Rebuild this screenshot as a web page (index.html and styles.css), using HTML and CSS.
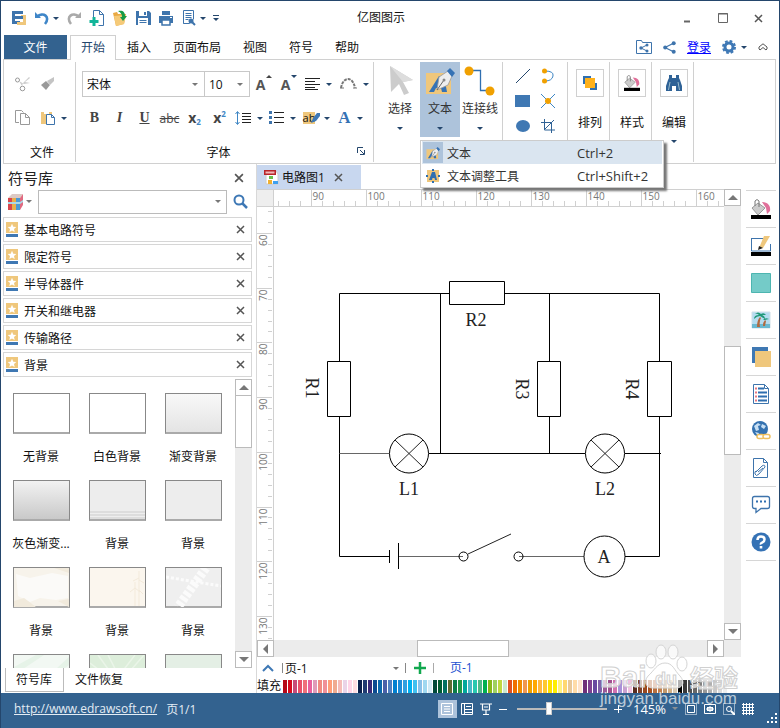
FILE: index.html
```html
<!DOCTYPE html>
<html lang="zh-CN">
<head>
<meta charset="utf-8">
<title>亿图图示</title>
<meta name="viewport" content="width=device-width, initial-scale=1">
<link rel="stylesheet" href="styles.css">
</head>
<body>
<svg class="sprite" aria-hidden="true">
  <symbol id="close" viewBox="0 0 9 9"><path d="M1 1l7 7M8 1l-7 7" stroke="currentColor" stroke-width="1.5" fill="none"/></symbol>
  <symbol id="star" viewBox="0 0 12 15"><path d="M0 0h12v11H0z" fill="#efc77c"/><path d="M0 12h12v3H0z" fill="#3f78b3"/><path d="M6 1.8l1.3 2.9 3 .3-2.300 2.100.700 3L6 8.500 3.300 10.100l.700-3L1.700 5l3-.3z" fill="#fff"/></symbol>
  <symbol id="pen-a" viewBox="0 0 30 30"><path d="M1 7h25v21H1z" fill="#efc77c"/><path d="M4 26L14 10h5l3 16h-5l-1-4h-5l-2 4z" fill="#3572b5"/><path d="M12 24L14 11l9-6 4 5-4 9z" fill="#eee" stroke="#999" stroke-width=".8"/><path d="M12 24l7-10" stroke="#666" fill="none"/><circle cx="19" cy="14" r="1.500" fill="#888"/><path d="M22 5l3-3 5 5-3 4z" fill="#3572b5"/></symbol>
  <symbol id="bucket" viewBox="0 0 20 20"><path d="M11 3c6 0 9 4 8 9l-3 3-1-6z" fill="#e0709a"/><path d="M1 9l6-5 7 5-7 7z" fill="#ccc" stroke="#999"/><path d="M4 7V2q2-3 4 0v6" fill="none" stroke="#777"/><path d="M0 16h20v4H0z" fill="#000"/></symbol>
</svg>
<div class="window">
  <header class="titlebar">
    <div class="quick">
      <svg width="16" height="16" viewBox="0 0 16 16"><path d="M1 1h11v3H4v2h8v3H4v2h5v3H1z" fill="#3e74ac"/><path d="M10 5h5v10H6v-3h6V8h-2z" fill="#efc77c"/><path d="M4 6h8v3H4z" fill="#3e74ac"/></svg>
      <button class="with-caret" aria-label="撤销"><svg width="16" height="16" viewBox="0 0 16 16"><path d="M1 2v6h6z" fill="#3f86c8"/><path d="M3 7c6-6 14 0 8 7" fill="none" stroke="#3f86c8" stroke-width="2.600"/></svg><i class="caret"></i></button>
      <button aria-label="重做"><svg width="16" height="16" viewBox="0 0 16 16"><path d="M15 2v6H9z" fill="#aaa"/><path d="M13 7C7 1-1 7 5 14" fill="none" stroke="#aaa" stroke-width="2.600"/></svg></button>
      <button aria-label="新建"><svg width="16" height="16" viewBox="0 0 16 16"><path d="M4.500 8V.5h6l4 4v11h-5" fill="#fff" stroke="#3e74ac"/><path d="M10.500.5v4h4" fill="none" stroke="#3e74ac"/><path d="M5 7v9M.5 11.500h9" stroke="#12b59a" stroke-width="3"/></svg></button>
      <button aria-label="打开"><svg width="16" height="16" viewBox="0 0 16 16"><path d="M1 3l4-1 1 2 8 0-2 10-8 2z" fill="#e9a942"/><path d="M2 6l12-1-2 9-8 2z" fill="#f5ca78"/><path d="M6 1c5-1 7 1 7 5h2l-4 5-3-4h2c0-3-1-4-4-6z" fill="#159a45"/></svg></button>
      <button aria-label="保存"><svg width="16" height="16" viewBox="0 0 16 16"><path d="M1 1h13l2 2v12H1z" fill="#3e74ac"/><path d="M4 1h8v5H4z" fill="#fff"/><path d="M9 2h2v3H9z" fill="#3e74ac"/><path d="M3 8h10v7H3z" fill="#fff"/><path d="M4.500 10.500h7M4.500 12.500h7" stroke="#3e74ac"/></svg></button>
      <button aria-label="打印"><svg width="16" height="16" viewBox="0 0 16 16"><path d="M4 1h8v4H4zM1 6h14v7H1z" fill="#3e74ac"/><path d="M4 10h8v5H4z" fill="#fff" stroke="#3e74ac" stroke-width="1.500"/><path d="M12 7.500h2" stroke="#fff"/></svg></button>
      <button class="with-caret" aria-label="预览"><svg width="16" height="16" viewBox="0 0 14 16"><path d="M1.500.5h10v9m-4 4h-6z" fill="none" stroke="#3e74ac"/><path d="M1.500.5v13M3.500 3.500h6M3.500 5.500h6M3.500 7.500h6M3.500 9.500h3" stroke="#3e74ac"/><circle cx="9" cy="11" r="2.500" fill="#3e74ac"/><path d="M10 12l3 3" stroke="#3e74ac" stroke-width="2"/></svg><i class="caret"></i></button>
      <span class="more"><i class="caret"></i></span>
    </div>
    <h1>亿图图示</h1>
    <div class="sys">
      <button aria-label="最小化"><svg width="10" height="10"><path d="M2 8.500h6" stroke="#666" stroke-width="2"/></svg></button>
      <button aria-label="最大化"><svg width="10" height="10"><path d="M.5.500h9v9h-9zM0 1h10" fill="none" stroke="#666" /></svg></button>
      <button aria-label="关闭"><svg width="9" height="9"><use href="#close" color="#555"/></svg></button>
    </div>
  </header>

  <nav class="tabs">
    <a class="file" href="#">文件</a>
    <a class="active" href="#">开始</a>
    <a href="#">插入</a>
    <a href="#">页面布局</a>
    <a href="#">视图</a>
    <a href="#">符号</a>
    <a href="#">帮助</a>
    <div class="account">
      <button aria-label="共享文件夹"><svg width="16" height="14" viewBox="0 0 16 14"><path d="M.5 13.500V.5h5l1 2h9v11z" fill="none" stroke="#3e74ac"/><path d="M11 5L5 8l6 3" fill="none" stroke="#3e74ac"/><circle cx="5" cy="8" r="1.700" fill="#3e74ac"/><circle cx="11" cy="5" r="1.500" fill="#3e74ac"/><circle cx="11" cy="11" r="1.500" fill="#3e74ac"/></svg></button>
      <button aria-label="分享"><svg width="13" height="13" viewBox="0 0 13 13"><path d="M11 2L2 6.500 11 11" fill="none" stroke="#3e74ac" stroke-width="1.200"/><circle cx="2.200" cy="6.500" r="2" fill="#3e74ac"/><circle cx="10.700" cy="2.200" r="2" fill="#3e74ac"/><circle cx="10.700" cy="10.800" r="2" fill="#3e74ac"/></svg></button>
      <a class="login" href="#">登录</a>
      <button class="with-caret" aria-label="设置"><svg width="14" height="14" viewBox="0 0 14 14"><circle cx="7" cy="7" r="4" fill="none" stroke="#3e78b5" stroke-width="3"/><circle cx="7" cy="7" r="6" fill="none" stroke="#3e78b5" stroke-width="2" stroke-dasharray="2.700 2"/></svg><i class="caret"></i></button>
      <button aria-label="折叠功能区"><svg width="10" height="8" viewBox="0 0 10 8"><path d="M1 4L5 .8 9 4v2L8 7 5 4.500 2 7 1 6z" fill="#fff" stroke="#555"/></svg></button>
    </div>
  </nav>

  <section class="ribbon">
    <div class="group clipboard">
      <div class="row">
        <button aria-label="剪切"><svg width="16" height="16" viewBox="0 0 16 16"><circle cx="2.500" cy="4" r="2" fill="none" stroke="#999"/><circle cx="7.500" cy="12.500" r="2.300" fill="none" stroke="#999"/><path d="M4 5l5 3 6-1-5-1 5-4-1-1-6 6-1 3z" fill="#ccc"/></svg></button>
        <button aria-label="格式刷"><svg width="14" height="14" viewBox="0 0 14 14"><path d="M0 8l5-4 4 4-4 5z" fill="#999"/><path d="M6 4l7-4v4L9 8z" fill="#c4c4c4"/></svg></button>
      </div>
      <div class="row">
        <button aria-label="复制"><svg width="16" height="16" viewBox="0 0 16 16"><path d="M4 12.500H.5V.5h6l2 2" fill="none" stroke="#999"/><path d="M5.500 3.500h5l4 4v7h-9zM10.500 3.500v4h4" fill="none" stroke="#999"/></svg></button>
        <button class="with-caret" aria-label="粘贴"><svg width="15" height="15" viewBox="0 0 15 15"><path d="M0 1h11v12H0z" fill="#efc77c"/><path d="M3 0h5v3H3z" fill="#fff"/><path d="M5.500 3.500h5l3 3v7h-8zM10.500 3.500v3h3" fill="#fff" stroke="#3e74ac"/></svg><i class="caret"></i></button>
      </div>
      <h2>文件</h2>
    </div>

    <div class="group font">
      <div class="row">
        <label class="combo family"><select aria-label="字体"><option>宋体</option></select><i class="caret grey"></i></label><label class="combo size"><select aria-label="字号"><option>10</option></select><i class="caret grey"></i></label>
        <button class="grow" aria-label="增大字号">A<i class="caret up"></i></button>
        <button class="grow" aria-label="减小字号">A<i class="caret"></i></button>
        <button class="with-caret" aria-label="对齐"><svg width="15" height="12"><path d="M0 .5h15M0 3.500h10M0 6.500h15M0 9.500h10M0 11.500h13" stroke="#222"/></svg><i class="caret"></i></button>
        <button class="with-caret" aria-label="曲线文字"><svg width="17" height="12" viewBox="0 0 17 12"><path d="M1 10C3-2 13-2 15 10" fill="none" stroke="#777" stroke-width="2" stroke-dasharray="3 1"/><path d="M0 10h4M13 10h4" stroke="#777"/></svg><i class="caret"></i></button>
      </div>
      <div class="row letters">
        <button><b>B</b></button>
        <button><em>I</em></button>
        <button><u>U</u></button>
        <button class="strike"><s>abc</s></button>
        <button>x<sub>2</sub></button>
        <button>x<sup>2</sup></button>
        <button class="with-caret" aria-label="行距"><svg width="16" height="14"><path d="M2.500 1v12M.5 3l2-2.500 2 2.500M.5 11l2 2.500 2-2.500" fill="none" stroke="#3e86c4"/><path d="M7 2.500h9M7 5.500h9M7 8.500h9M7 11.500h9" stroke="#222"/></svg><i class="caret"></i></button>
        <button class="with-caret" aria-label="项目符号"><svg width="15" height="14"><path d="M0 0h3v3H0zM0 5h3v3H0zM0 10h3v3H0z" fill="#3e74ac"/><path d="M5 1.500h10M5 6.500h10M5 11.500h10" stroke="#222"/></svg><i class="caret"></i></button>
        <button class="with-caret highlight" aria-label="突出显示"><span>ab</span><svg width="10" height="12"><path d="M1 11l2-5L7 1h3v3L6 9z" fill="#3e78b5"/></svg><i class="caret"></i></button>
        <button class="with-caret color"><b>A</b><i class="caret"></i></button>
      </div>
      <h2>字体</h2>
      <button class="expander" aria-label="字体设置"><svg width="8" height="8"><path d="M.5 6V.5H6M3 3l4 4M7.500 3v4.500H3" fill="none" stroke="#24466c"/></svg></button>
    </div>

    <div class="group tools">
      <button class="tool"><svg width="30" height="32" viewBox="0 0 30 32"><path d="M5 1l23 14-10 2 6 11-5 2-5-11-8 8z" fill="#ccc"/><path d="M5 1l23 14-10 2z" fill="#ddd"/></svg>选择<i class="caret"></i></button>
      <button class="tool on"><svg width="30" height="32"><use href="#pen-a"/></svg>文本<i class="caret"></i></button>
      <button class="tool"><svg width="32" height="32" viewBox="0 0 32 32"><path d="M5 5.500h11.500v20H26" fill="none" stroke="#2f6fb0" stroke-width="1.300"/><circle cx="5" cy="6" r="4.500" fill="#f0a000"/><circle cx="26" cy="26" r="4.500" fill="#f0a000"/></svg>连接线<i class="caret"></i></button>
    </div>

    <div class="group shapes">
      <button aria-label="直线"><svg width="16" height="16"><path d="M1 15L15 1" stroke="#24466c"/></svg></button>
      <button aria-label="弧线"><svg width="16" height="16"><path d="M5 3q9 0 8 5t-8 5" fill="none" stroke="#3e86c4"/><circle cx="4.500" cy="3" r="2.500" fill="#f0a000"/><circle cx="4.500" cy="13" r="2.500" fill="#f0a000"/></svg></button>
      <button aria-label="矩形"><svg width="16" height="16"><path d="M0 2h15v12H0z" fill="#3f78b3"/></svg></button>
      <button aria-label="连接点"><svg width="16" height="16"><path d="M1 1l14 14M15 1L1 15" stroke="#3e86c4"/><circle cx="8" cy="8" r="3" fill="#f0a000"/></svg></button>
      <button aria-label="椭圆"><svg width="16" height="16"><ellipse cx="8" cy="8" rx="7" ry="6" fill="#3f78b3"/></svg></button>
      <button aria-label="裁剪"><svg width="16" height="16"><path d="M4.500 1v11H15M1 4.500h10.500V15M4 12L14 2" fill="none" stroke="#2f6296"/></svg></button>
    </div>

    <div class="group big"><button><span><svg width="16" height="16"><path d="M1 1h8v8H1zM8 8h7v7H8z" fill="#2f6fb0"/><path d="M3 3h10v10H3z" fill="#ffb11a"/></svg></span>排列</button></div>
    <div class="group big"><button><span><svg width="16" height="16"><use href="#bucket"/></svg></span>样式</button></div>
    <div class="group big"><button><span><svg width="16" height="16"><path d="M3 0h3v3h4V0h3v3l1 2 2 6v5h-6v-5H6v5H0v-5l2-6 1-2z" fill="#2f6296"/><path d="M4 7L2.500 15M12 7l1.500 8" stroke="#9bc"/></svg></span>编辑<i class="caret"></i></button></div>

    <ul class="menu">
      <li><button class="hover"><span><svg width="14" height="14"><use href="#pen-a"/></svg></span>文本<kbd>Ctrl+2</kbd></button></li>
      <li><button><span><svg width="14" height="14" viewBox="0 0 14 14"><path d="M1 1h12v12H1z" fill="#efc77c"/><path d="M3 11l3-8h3l2 8H9L8.500 9h-2L6 11z" fill="#2f6fb0"/><path d="M6 0h2v2H6zM6 12h2v2H6zM0 6h2v2H0zM12 6h2v2h-2z" fill="#2f6fb0"/></svg></span>文本调整工具<kbd>Ctrl+Shift+2</kbd></button></li>
    </ul>
  </section>

  <main class="work">
    <aside class="library">
      <div class="head"><h2>符号库</h2><button aria-label="关闭符号库"><svg width="10" height="10"><use href="#close"/></svg></button></div>
      <div class="search">
        <button class="with-caret" aria-label="符号库列表"><svg width="15" height="16" viewBox="0 0 15 16"><path d="M0 4L4 0h11l-3 4z" fill="#ddc9c4"/><path d="M0 4h4v12H0z" fill="#d8464c"/><path d="M4 4h4v12H4z" fill="#e8b04c"/><path d="M8 4h4v12H8z" fill="#4a9ad4"/><path d="M12 4l3-4v11l-3 5z" fill="#e06a80"/><path d="M0 8h12l3-2v2l-3 2H0z" fill="#a8d8e8"/></svg><i class="caret grey"></i></button>
        <label class="field"><input type="text" aria-label="搜索符号"><i class="caret grey"></i></label>
        <button aria-label="搜索"><svg width="15" height="15" viewBox="0 0 15 15"><circle cx="6" cy="6" r="4.500" fill="none" stroke="#3e78b5" stroke-width="2"/><path d="M9 9l5 5" stroke="#3e78b5" stroke-width="2.500"/></svg></button>
      </div>
      <ul class="sets">
        <li><svg width="12" height="15"><use href="#star"/></svg>基本电路符号<button aria-label="关闭"><svg width="9" height="9"><use href="#close"/></svg></button></li>
        <li><svg width="12" height="15"><use href="#star"/></svg>限定符号<button aria-label="关闭"><svg width="9" height="9"><use href="#close"/></svg></button></li>
        <li><svg width="12" height="15"><use href="#star"/></svg>半导体器件<button aria-label="关闭"><svg width="9" height="9"><use href="#close"/></svg></button></li>
        <li><svg width="12" height="15"><use href="#star"/></svg>开关和继电器<button aria-label="关闭"><svg width="9" height="9"><use href="#close"/></svg></button></li>
        <li><svg width="12" height="15"><use href="#star"/></svg>传输路径<button aria-label="关闭"><svg width="9" height="9"><use href="#close"/></svg></button></li>
        <li><svg width="12" height="15"><use href="#star"/></svg>背景<button aria-label="关闭"><svg width="9" height="9"><use href="#close"/></svg></button></li>
      </ul>
      <div class="gallery">
        <div class="thumbs">
          <figure><div class="thumb"></div><figcaption>无背景</figcaption></figure>
          <figure><div class="thumb"></div><figcaption>白色背景</figcaption></figure>
          <figure><div class="thumb light"></div><figcaption>渐变背景</figcaption></figure>
          <figure><div class="thumb dark"></div><figcaption>灰色渐变...</figcaption></figure>
          <figure><div class="thumb banded"></div><figcaption>背景</figcaption></figure>
          <figure><div class="thumb plain"></div><figcaption>背景</figcaption></figure>
          <figure><div class="thumb paper"><svg viewBox="0 0 55 39"><path d="M2 6l14 4 22-5 16 3v22l-12 2-16-2-10 4-12-6z" fill="#fbfaf8"/><path d="M0 33l10-3 12 9H0zM40 0l15 5V0zM44 33l11-2v8z" fill="#f1eadc"/></svg></div><figcaption>背景</figcaption></figure>
          <figure><div class="thumb cream"><svg viewBox="0 0 55 39"><path d="M49 3v35M45 14v24M49 10l-6 3M49 12l5 3M45 20l-5 4M45 20l5 4M49 22l4 4" stroke="#f3eadb" fill="none"/></svg></div><figcaption>背景</figcaption></figure>
          <figure><div class="thumb road"><svg viewBox="0 0 55 39"><path d="M40 0L12 39" stroke="#fbfbfb" stroke-width="9" stroke-dasharray="4 2"/><path d="M0 9l55 9" stroke="#fbfbfb" stroke-width="3" stroke-dasharray="3 2"/></svg></div><figcaption>背景</figcaption></figure>
          <figure><div class="thumb green"><svg viewBox="0 0 55 39"><path d="M0 12L22 0h8L0 20zM15 39L55 2v8z" fill="#e6f3e8"/></svg></div></figure>
          <figure><div class="thumb rays"><svg viewBox="0 0 55 39"><path d="M8 0l28 39M18 0l20 39M45 0L15 39M54 0L20 39M0 8l40 31" stroke="#eaf5e8" stroke-width="1.500"/></svg></div></figure>
          <figure><div class="thumb mint"></div></figure>
        </div>
        <div class="scroll-v"><button class="arrow" aria-label="向上"><i class="tri up"></i></button><div class="bar"></div><div class="fill"></div><button class="arrow" aria-label="向下"><i class="tri down"></i></button></div>
      </div>
      <div class="panel-tabs"><a class="active" href="#">符号库</a><a href="#">文件恢复</a></div>
    </aside>

    <section class="editor">
      <div class="docs">
        <a class="doc" href="#"><svg width="15" height="15" viewBox="0 0 15 15"><path d="M2 1h10l2 3v10H2z" fill="#fff" stroke="#ccc"/><path d="M0 0h12v5H0z" fill="#b8252b"/><path d="M1.500 1.500h9v2h-9z" fill="#f0b8b8"/><path d="M5 6h4v3H5z" fill="#6abf4b"/><path d="M4 10h4v4H4z" fill="#f0b030"/><path d="M9 11h5v3H9z" fill="#3ea0f0"/></svg>电路图1<span><svg width="9" height="9"><use href="#close"/></svg></span></a>
      </div>
      <div class="stage">
        <div class="corner"></div>
        <div class="ruler-h"><svg id="ruler-x" width="100%" height="16"></svg></div>
        <div class="ruler-v"><svg id="ruler-y" width="15" height="100%"></svg></div>
        <div class="canvas">
          <svg class="circuit" width="450" height="433" viewBox="274 207 450 433" role="img" aria-label="电路图">
            <g fill="none" stroke="#000">
              <path d="M449 293.500H339.500V361M339.500 416V556.500H390M505 293.500h154.500V361M659.500 416V556.500H625M440.500 293.500v160M549.500 293.500V361M549.500 416v37.500M429 453.500h156M625 453.500h36"/>
              <path d="M339.500 453.500H389M398.500 556.500H463M519 556.500h65" stroke="#666"/>
              <path d="M449.500 281.500h55v23h-55zM327.500 361.500h23v55h-23zM537.500 361.500h23v55h-23zM647.500 361.500h24v55h-24zM389.500 550v13M398.500 543v26"/>
              <path d="M395 440l28 27M423 440l-28 27M591 440l28 27M619 440l-28 27M468 554l43-20" stroke="#222"/>
              <circle cx="409" cy="453.500" r="19.500"/><circle cx="605" cy="453.500" r="19.500"/>
              <circle cx="463.500" cy="556.500" r="4.500"/><circle cx="518.500" cy="556.500" r="4.500"/><circle cx="604.500" cy="556.500" r="20.500"/>
            </g>
            <text x="476" y="326">R2</text><text x="409" y="495">L1</text><text x="605" y="495">L2</text><text x="604" y="563">A</text>
            <text transform="translate(306 388) rotate(90)">R1</text><text transform="translate(516 389) rotate(90)">R3</text><text transform="translate(626 389) rotate(90)">R4</text>
          </svg>
        </div>
        <div class="scroll-v main"><button class="arrow" aria-label="向上"><i class="tri up"></i></button><div class="lead"></div><div class="bar"></div><div class="fill"></div><button class="arrow" aria-label="向下"><i class="tri down"></i></button></div>
        <div class="scroll-h"><button class="arrow" aria-label="向左"><i class="tri left"></i></button><div class="lead"></div><div class="bar"></div><div class="fill"></div><button class="arrow" aria-label="向右"><i class="tri right"></i></button></div>
        <div class="end"></div>
      </div>
      <div class="pages">
        <button aria-label="展开页面"><svg width="12" height="8"><path d="M1 7l5-5 5 5" fill="none" stroke="#3e78b5" stroke-width="2"/></svg></button>
        <label class="page-select"><select aria-label="页面"><option>页-1</option></select><i class="caret grey"></i></label>
        <button aria-label="添加页面"><svg width="12" height="12"><path d="M6 0v12M0 6h12" stroke="#11a84e" stroke-width="2.500"/></svg></button>
        <a href="#">页-1</a>
      </div>
      <div class="palette"><span>填充</span><div id="swatches"></div></div>
    </section>

    <nav class="rail">
      <button aria-label="填充"><svg width="20" height="20"><use href="#bucket"/></svg></button>
      <button aria-label="线条"><svg width="20" height="20" viewBox="0 0 20 20"><path d="M.5 2.500h13M.5 2v13H19.500V8" fill="none" stroke="#3e74ac"/><path d="M8 12l5-12h6l-7 12z" fill="#efc77c"/><path d="M7 14l1-4 4 2z" fill="#222"/><path d="M0 16h20v4H0z"/></svg></button>
      <button aria-label="主题色"><svg width="20" height="20"><path d="M.5 .5h19v19H.5z" fill="#74cbc8" stroke="#4db5b0"/></svg></button>
      <button aria-label="图片"><svg width="20" height="20" viewBox="0 0 20 20"><path d="M1 2h18v16H1z" fill="#b4dcf0" stroke="#d0dfe8"/><path d="M1 14h18v4H1z" fill="#6ab8d0"/><path d="M6 17q0-7 3-10l1 1q-2 3-1 9zM12 16q0-4 2-6l1 1-1 5z" fill="#b06a40"/><path d="M3 9q0-4 5-4-2-2-4-1 3-3 6 0 3-2 5 1l-4 0q3 1 3 4L9 6q-3 0-6 3zM12 10q2-3 6-1l-4 1z" fill="#209878"/></svg></button>
      <button aria-label="图层"><svg width="20" height="20"><path d="M1 0h16v16H1z" fill="#3f78b3"/><path d="M4 4h16v16H4z" fill="#efc77c"/></svg></button>
      <button aria-label="属性"><svg width="20" height="20" viewBox="0 0 20 20"><path d="M2.500.5h11l4 4v15h-15zM13.500.5v4h4" fill="none" stroke="#3e74ac"/><path d="M7 4.500h6M7 8.500h9M7 12.500h9M7 16.500h9" stroke="#2f6fb0" stroke-width="2"/><path d="M4 4.500h2M4 8.500h2M4 12.500h2M4 16.500h2" stroke="#e87880" stroke-width="2"/></svg></button>
      <button aria-label="超链接"><svg width="20" height="20" viewBox="0 0 20 20"><circle cx="9" cy="8" r="8" fill="#3572b0"/><path d="M3 5l4-3 3 2-3 1 1 4-3 1zM11 3l4 2-2 3-3-2zM4 11l4 1-1 3z" fill="#c8e0f4"/><rect x="6" y="13.500" width="7" height="4" rx="2" fill="#fff" stroke="#efc060" stroke-width="1.500"/><rect x="12" y="13.500" width="7" height="4" rx="2" fill="#fff" stroke="#efc060" stroke-width="1.500"/></svg></button>
      <button aria-label="附件"><svg width="20" height="20" viewBox="0 0 20 20"><path d="M2.500.5h10l4 4v15h-14zM12.500.5v4h4" fill="none" stroke="#3e74ac"/><path d="M5 14l6-6q3-2 3 1l-6 7q-3 3-4 0t2-3l5-5M7 14l5-4" fill="none" stroke="#3e74ac"/></svg></button>
      <button aria-label="批注"><svg width="20" height="20" viewBox="0 0 20 20"><path d="M3.500 1.500h13q2 0 2 2v8q0 2-2 2H10l-5 4v-4H3.500q-2 0-2-2v-8q0-2 2-2z" fill="none" stroke="#3e74ac" stroke-width="1.300"/><path d="M5 6.500h2M9 6.500h2M13 6.500h2" stroke="#2f6fb0" stroke-width="2"/></svg></button>
      <button aria-label="帮助"><svg width="20" height="20" viewBox="0 0 20 20"><circle cx="10" cy="10" r="9.500" fill="#3572b5"/><path d="M6.500 8q0-3.500 3.500-3.500T13.500 7.500q0 2-2 2.800T10 12.500" fill="none" stroke="#fff" stroke-width="2.500"/><path d="M8.700 14h2.600v2.500H8.700z" fill="#fff"/></svg></button>
    </nav>
  </main>

  <footer class="status">
    <a href="#">http://www.edrawsoft.cn/</a><span>页1/1</span>
    <div class="views">
      <button class="on" aria-label="普通视图"><svg width="12" height="12"><path d="M.5.5h11v11H.5zM3 3.500h6M3 6h6M3 8.500h6" fill="none" stroke="#fff"/></svg></button>
      <button aria-label="页面视图"><svg width="12" height="12"><path d="M.5.5h11v11H.5zM3.500 1v10M4 6.500h7M4 9.500h7M5 3.500h5" fill="none" stroke="#fff"/></svg></button>
      <button aria-label="演示"><svg width="12" height="12"><path d="M0 1h12M2.500 1v6h7V1M4 4h4M6 7v4M3 11.500h6" fill="none" stroke="#fff" stroke-width="1.200"/></svg></button>
      <button aria-label="缩小"><svg width="8" height="8"><path d="M0 4.500h8" stroke="#fff"/></svg></button>
      <input type="range" aria-label="缩放" min="0" max="100" value="35">
      <button aria-label="放大"><svg width="8" height="8"><path d="M0 4.500h8M4.500 0v8" stroke="#fff"/></svg></button>
      <button class="zoom-level">145%<i class="caret"></i></button>
      <button aria-label="适合页面"><svg width="12" height="12"><path d="M.5.500h11v11H.5z" fill="none" stroke="#fff" stroke-dasharray="1 1"/><path d="M2.500 2.500h7v7h-7z" fill="none" stroke="#fff"/></svg></button>
      <button aria-label="适合宽度"><svg width="12" height="12"><path d="M.5 1.500h11v9H.5zM2 6h8M3.500 4v4M8.500 4v4M6 3v6M4 4.500h4v3H4z" fill="none" stroke="#fff"/></svg></button>
      <button aria-label="区域缩放"><svg width="12" height="12"><path d="M.5.500h11v11H.5z" fill="none" stroke="#fff" stroke-dasharray="1 1"/><circle cx="6" cy="6" r="2.500" fill="none" stroke="#fff"/><path d="M8 8l4 4" stroke="#fff" stroke-width="2"/></svg></button>
      <button aria-label="网格"><svg width="12" height="12"><path d="M1.500 0v12M4.500 0v12M7.500 0v12M10.500 0v12M0 1.500h12M0 4.500h12M0 7.500h12M0 10.500h12" stroke="#fff"/></svg></button>
    </div>
    <svg class="grip" width="11" height="11"><path d="M8 0h2v2H8zM4 4h2v2H4zM8 4h2v2H8zM0 8h2v2H0zM4 8h2v2H4zM8 8h2v2H8z" fill="#fff"/></svg>
  </footer>

  <svg class="mark" width="142" height="72" viewBox="0 0 142 72">
    <g class="paw"><ellipse cx="51" cy="20" rx="5" ry="7"/><ellipse cx="61" cy="11" rx="5" ry="7"/><ellipse cx="73" cy="11" rx="5" ry="7"/><ellipse cx="82" cy="23" rx="5" ry="7"/><path d="M65 22c8 0 9 7 15 13 6 7 2 13-6 12H55c-9 1-12-6-7-12 6-5 9-13 17-13z"/></g>
    <text class="bai" x="0" y="46">Bai</text><text class="du" x="55" y="44">du</text><text class="exp" x="90" y="46">经验</text><text class="site" x="0" y="63">jingyan.baidu.com</text>
  </svg>
</div>
<script src="app.js"></script>
</body>
</html>
```
FILE: styles.css
```css
* { box-sizing: border-box; }
body, h1, h2, ul, figure { margin: 0; padding: 0; font-weight: normal; }
body, button, input, select { font-family: "Open Sans", "Noto Sans CJK SC", sans-serif; font-size: 12px; color: #111; }
ul { list-style: none; }
button { background: none; border: 0; padding: 0; display: flex; align-items: center; justify-content: center; }
a { color: inherit; text-decoration: none; }
svg { display: block; flex: none; }
.sprite { position: absolute; width: 0; height: 0; }
.caret { border: 3px solid transparent; border-top-color: #24466c; border-bottom: 0; width: 0; height: 0; flex: none; }
.caret.grey { border-top-color: #777; }
.caret.up { border-top: 0; border-bottom: 3px solid #444; }
.with-caret { gap: 5px; }

.window { position: relative; display: flex; flex-direction: column; min-height: 100vh; border: 1px solid #24466c; border-bottom: 0; background: #fff; overflow: hidden; }

.titlebar { height: 34px; display: grid; grid-template-columns: 1fr auto 1fr; align-items: center; padding: 0 16px 0 10px; }
.quick { display: flex; align-items: center; gap: 7px; height: 30px; }
.quick .with-caret { gap: 3px; }
.more { display: flex; border-top: 1px solid #24466c; padding-top: 2px; }
.titlebar h1 { font-size: 12px; line-height: 34px; padding-right: 12px; }
.sys { display: flex; justify-content: flex-end; align-items: center; gap: 26px; height: 28px; }

.tabs { height: 24px; display: flex; padding-left: 3px; line-height: 25px; }
.tabs > a { padding: 0 11px; }
.tabs > .file { background: #33628f; color: #fff; width: 63px; text-align: center; margin-right: 3px; }
.tabs > .active { position: relative; z-index: 1; height: 25px; padding: 0 10px; border: 1px solid #d0d0d0; border-bottom: 0; background: #fff; color: #24466c; line-height: 24px; }
.account { margin-left: auto; display: flex; align-items: center; gap: 11px; padding-right: 11px; }
.login { color: #00f; text-decoration: underline; }

.ribbon { position: relative; height: 105px; margin: 0 3px 0 2px; border: 1px solid #d0d0d0; display: flex; padding: 2px 0 1px; }
.group { position: relative; border-right: 1px solid #d0d0d0; display: flex; flex-direction: column; flex: none; }
.group h2 { font-size: 12px; line-height: 18px; text-align: center; margin-top: auto; }
.clipboard { width: 72px; padding-left: 11px; }
.clipboard h2 { margin-left: -11px; padding-left: 5px; }
.clipboard .row { gap: 10px; }
.row { display: flex; align-items: center; height: 34px; margin-top: 3px; padding-top: 4px; }
.row + .row { height: 38px; margin-top: 0; padding-top: 0; }
.font { width: 298px; padding-left: 6px; }
.font h2 { padding-right: 18px; }
.combo { position: relative; display: flex; align-items: center; height: 26px; border: 1px solid #c8c8c8; }
.combo + .combo { border-left: 0; }
.combo .caret { position: absolute; right: 6px; }
.family { width: 123px; }
.size { width: 45px; }
select { appearance: none; background: none; border: 0; width: 100%; padding: 0 4px; outline: 0; }
.grow { font: bold 14px "Open Sans", sans-serif; color: #555; width: 16px; margin-left: 6px; align-items: flex-start; gap: 1px; }
.grow + .grow { margin-left: 9px; }
.font .row > .with-caret { margin-left: 8px; gap: 6px; }
.letters button { font: bold 14px "Liberation Serif", serif; color: #444; width: 25px; flex: none; }
.letters .strike { font: 12px "Open Sans", sans-serif; }
.letters button sub, .letters button sup { font-size: 8px; color: #3e86c4; }
.letters button:nth-child(5), .letters button:nth-child(6) { font-family: "Open Sans", sans-serif; line-height: 16px; }
.letters sub { align-self: flex-end; line-height: 8px; }
.letters sup { align-self: flex-start; line-height: 8px; }
.font .letters > .with-caret { width: 27px; margin-left: 7px; }
.font .letters > button:nth-child(7) { margin-left: 3px; }
.font .letters .highlight { font: 11px "Open Sans", sans-serif; color: #111; gap: 0; }
.highlight span { background: #efc77c; line-height: 12px; margin-right: -5px; }
.highlight .caret { margin-left: 4px; }
.font .letters .color { color: #3572b5; font-size: 17px; }
.expander { position: absolute; right: 8px; bottom: 7px; }
.tools { flex-direction: row; width: 129px; padding-left: 6px; }
.tool { flex-direction: column; justify-content: flex-start; width: 40px; height: 75px; padding-top: 3px; line-height: 24px; color: #333; white-space: nowrap; }
.tool .caret { margin-top: 6px; }
.tool.on { background: #adc3db; }
.shapes { width: 65px; display: grid; grid-template-columns: 16px 16px; gap: 9px; align-content: start; justify-content: center; padding-top: 6px; }
.big { width: 42px; padding-left: 3px; }
.big button { flex-direction: column; line-height: 20px; padding-top: 7px; }
.big span { display: flex; align-items: center; justify-content: center; width: 28px; height: 28px; border: 1px solid #d0d0d0; margin-bottom: 16px; }
.big .caret { margin-top: 7px; }
.menu { position: absolute; z-index: 5; left: 416px; top: 80px; width: 244px; background: #fff; border: 1px solid #ccc; box-shadow: 3px 3px 2px #777; padding: 0 1px; }
.menu button { width: 100%; height: 23px; justify-content: flex-start; color: #333; }
.menu span { width: 20px; height: 21px; display: flex; align-items: center; justify-content: center; margin: 0 4px 0 1px; }
.menu .hover { background: #dae5f0; }
.menu .hover span { background: #adc3db; }
.menu kbd { font: inherit; font-size: 13px; margin-left: auto; width: 85px; text-align: left; }

.work { flex: 1; display: flex; min-height: 529px; }
.library { width: 256px; display: flex; flex-direction: column; padding-right: 4px; border-right: 1px solid #d8d8d8; flex: none; }
.head { display: flex; justify-content: space-between; align-items: center; height: 26px; padding: 2px 8px 0 7px; }
.head h2 { font-size: 15px; line-height: 24px; color: #222; }
.head button, .sets button { color: #555; }
.search { display: flex; align-items: center; height: 23px; padding: 0 4px 0 7px; gap: 6px; }
.search .with-caret { gap: 3px; }
.field { position: relative; flex: 1; display: flex; align-items: center; height: 24px; border: 1px solid #bbb; }
.field input { width: 100%; border: 0; background: none; outline: 0; padding: 0 4px; }
.field .caret { position: absolute; right: 5px; }
.sets { padding: 4px 0 0 2px; display: grid; gap: 2px; }
.sets li { display: flex; align-items: center; gap: 6px; height: 25px; border: 1px solid #d6d6d6; padding: 0 6px 0 2px; }
.sets button { margin-left: auto; }
.gallery { flex: 1 0 289px; height: 289px; display: flex; margin-top: 2px; }
.thumbs { flex: 1; display: grid; grid-template-columns: repeat(3, 76px); grid-auto-rows: 87px; height: 289px; min-height: 100%; padding: 14px 0 0 2px; overflow: hidden; justify-content: start; align-content: start; }
.thumbs figure { text-align: center; display: flex; flex-direction: column; align-items: center; }
.thumb { width: 57px; height: 41px; border: 1px solid #888; border-bottom: 2px solid #aaa; margin-bottom: 13px; }
.thumbs figcaption { line-height: 20px; }
.light { background: linear-gradient(#f8f8f8, #e4e4e4); }
.dark { background: linear-gradient(#f2f2f2, #c9c9c9); }
.banded { background: repeating-linear-gradient(#ddd 0 2px, #eee 2px 3px) bottom / 100% 8px no-repeat #ededed; }
.plain { background: #ededed; }
.paper { background: #f7f3eb; }
.cream { background: #fbf6ee; }
.road { background: #efefef; }
.green { background: #f2f8f3; }
.rays { background: #ddeedb; }
.mint { background: #e4efe5; }
.scroll-v { width: 17px; display: flex; flex-direction: column; background: #ececec; }
.arrow { width: 17px; height: 17px; background: #fff; border: 1px solid #bbb; flex: none; }
.tri { border: 5px solid transparent; width: 0; height: 0; }
.tri.up { border-top: 0; border-bottom-color: #777; }
.tri.down { border-bottom: 0; border-top-color: #777; }
.tri.left { border-left: 0; border-right-color: #777; }
.tri.right { border-right: 0; border-left-color: #777; }
.bar { background: #fff; border: 1px solid #bbb; }
.fill { flex: 1; }
.gallery .bar { height: 53px; margin-top: -1px; flex: none; }
.panel-tabs { display: flex; height: 25px; padding: 0 0 1px 4px; line-height: 24px; }
.panel-tabs a { padding: 0 11px; }
.panel-tabs .active { border: 1px solid #bbb; border-top: 0; padding: 0 11px 0 10px; }

.editor { flex: 1; min-width: 0; display: flex; flex-direction: column; }
.docs { height: 25px; padding-top: 1px; display: flex; }
.doc { display: flex; align-items: center; gap: 3px; width: 104px; padding-left: 7px; background: #c8d7ef; }
.doc span { color: #555; margin-left: 6px; }
.stage { flex: 1; display: grid; grid-template: 18px minmax(0, 1fr) 17px / 17px minmax(0, 1fr) 17px; min-height: 468px; }
.corner { background: #eee; border: 1px solid #d0d0d0; border-left: 0; }
.ruler-h { border: 1px solid #d0d0d0; border-width: 1px 0; overflow: hidden; }
.ruler-v { border-right: 1px solid #d0d0d0; overflow: hidden; }
.ruler-h path, .ruler-v path { stroke: #d0d0d0; fill: none; }
.ruler-h text, .ruler-v text { font-size: 10px; fill: #777; }
.canvas { overflow: hidden; min-height: 0; }
.circuit text { font-family: "Liberation Serif", serif; font-size: 18px; fill: #222; text-anchor: middle; }
.main { grid-column: 3; grid-row: 1 / 3; }
.main .lead { flex: 140; }
.main .bar { height: 109px; flex: none; }
.main .fill { flex: 168; }
.scroll-h { grid-column: 1 / 3; grid-row: 3; display: flex; background: #ececec; }
.scroll-h .lead { flex: 142; }
.scroll-h .bar { width: 92px; flex: none; }
.scroll-h .fill { flex: 197; }
.end { background: #ececec; }
.pages { height: 22px; display: flex; align-items: center; padding-left: 5px; }
.page-select { position: relative; display: flex; align-items: center; height: 10px; width: 124px; margin: 0 8px; border: 1px solid #888; border-width: 0 1px; }
.page-select select { padding: 0 2px; }
.page-select .caret { position: absolute; right: 6px; }
.pages a { margin-left: 7px; border-left: 1px solid #aaa; padding-left: 16px; line-height: 10px; color: #1c4fd0; }
.palette { display: flex; align-items: center; height: 14px; line-height: 14px; }
#swatches { display: flex; gap: 1px; margin-left: 2px; overflow: hidden; }
#swatches i { width: 4px; height: 13px; flex: none; }

.rail { width: 38px; padding: 26px 3px 0 5px; flex: none; }
.rail button { width: 30px; height: 37px; border-top: 1px solid #d6d6d6; }
.rail button:last-child { height: 38px; border-bottom: 1px solid #d6d6d6; }

.status { height: 35px; display: flex; align-items: center; background: #33628f; color: #e4edf5; margin: 0 -1px; padding: 0 2px 4px 14px; }
.status a { text-decoration: underline; }
.status > span { margin-left: 9px; }
.views { margin-left: auto; display: flex; align-items: center; gap: 7px; }
.views .on { width: 19px; height: 18px; background: #adc3db; margin-right: -3px; }
.views input { appearance: none; width: 90px; height: 14px; margin: 0 0 0 3px; background: linear-gradient(#bbb, #bbb) center / 100% 2px no-repeat; }
.views input::-webkit-slider-thumb { appearance: none; width: 6px; height: 13px; background: #fff; border: 1px solid #ccc; }
.zoom-level { color: #fff; font-size: 13px; gap: 6px; margin: 0 0 0 4px; }
.zoom-level .caret { border-top-color: #8a8f94; }
.grip { align-self: flex-end; margin-left: 13px; }

.mark { position: absolute; right: 37px; bottom: 15px; pointer-events: none; overflow: visible; }
.paw { fill: #fff; stroke: #d4d4d4; fill-opacity: .7; }
.mark text { font-family: "Liberation Sans", "Noto Sans CJK SC", sans-serif; fill: #fff; fill-opacity: .7; stroke: #d0d0d0; stroke-width: 1px; }
.mark .bai { font-size: 30px; font-weight: bold; }
.mark .du { font-size: 18px; font-weight: bold; }
.mark .exp { font-size: 24px; font-weight: bold; }
.mark .site { font-size: 17px; stroke: none; fill: #dde6ee; fill-opacity: .8; }
```
FILE: app.js
```js
const colours = `b50717 d50a1e c84b78 e85068 f0707a e8609c e09ab8 f08a80 f09098 ff9e78 f0ab90 f5bcb8 ead4e8 ffd5e8 ffdde2
0a1f4c 1f3a70 3a2a78 0a4a90 0a68ac 4a60a8 5080c0 0080d0 1a8cd8 30a0e0 00b0f0 40c0f0 88c0e8 a0d8f0 d0eaf5
004838 005c30 007060 5f6a30 0a7c48 209848 00a89c 48b8c8 28c8b0 50b888 00b050 88b818 a0d060 c0d840 cce8cc
e05020 f07000 f08c00 f09850 f0a000 ffa800 ffb840 ffc830 ffe000 ffee00 fff080 ffd870 e8c898 ffdca8 ffe4cc
703078 804090 6848a0 8060a8 9a5a98 a05090 d070b0 a890d8 c8a0d0 f0c0e0
582c20 804028 984820 a85020 b87040 c08050 c0986c d0b088 d8c8b0
000000 383838 505050 686868 808080 989898 b0b0b0 c8c8c8 dcdcdc eeeeee`.split(/\s+/);
const swatches = document.getElementById('swatches');
for (const c of colours) {
  const i = document.createElement('i');
  i.style.background = '#' + c;
  swatches.append(i);
}

// Five ticks to each labelled division; a long line marks the label.
function ruler(id, first, start, step, count, vertical) {
  let path = '', labels = '';
  for (let n = -1; n < count; n++) {
    const at = Math.round(start + n * step) + 0.5;
    path += vertical ? `M0 ${at}H16` : `M${at} 0V16`;
    for (let k = 1; k < 5; k++) {
      const t = Math.round(start + n * step + k * step / 5) + 0.5;
      path += vertical ? `M11 ${t}H16` : `M${t} 11V16`;
    }
    if (n < 0) continue;
    const value = first + n * 10;
    labels += vertical
      ? `<text transform="translate(10 ${at + 1}) rotate(-90)" text-anchor="end">${value}</text>`
      : `<text x="${at + 1}" y="10">${value}</text>`;
  }
  document.getElementById(id).innerHTML = `<path d="${path}"/>${labels}`;
}
ruler('ruler-x', 90, 37, 55, 8, false);
ruler('ruler-y', 60, 26, 54.7, 8, true);
```
